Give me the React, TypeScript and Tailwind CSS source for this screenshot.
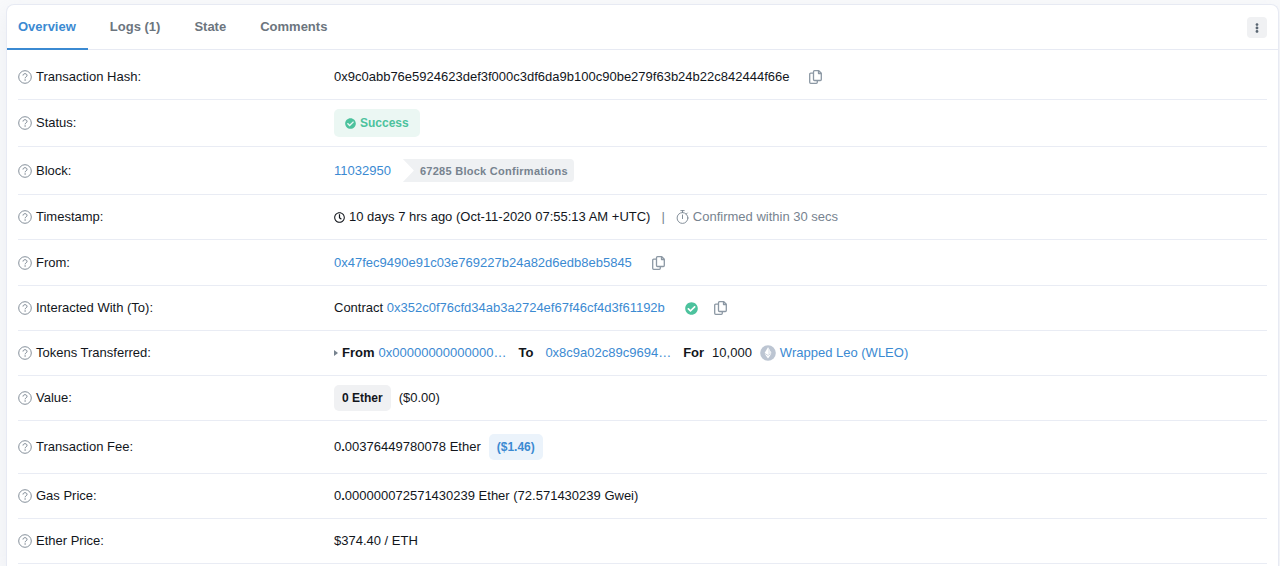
import type { ReactNode } from "react";
import { FaCheckCircle, FaEllipsisV, FaRegClock } from "react-icons/fa";

const tabs = ["Overview", "Logs (1)", "State", "Comments"];

function HelpIcon() {
  return (
    <svg viewBox="0 0 14 14" className="size-[14px] shrink-0 text-[#77838f]" fill="none" stroke="currentColor" aria-hidden="true">
      <circle cx="7" cy="7" r="6.3" strokeWidth="0.9" />
      <path d="M5 5.5C5.1 4.3 5.9 3.7 7 3.7c1.200 0 2 .7 2 1.700 0 1.500-1.900 1.500-1.900 2.900" strokeWidth="1" />
      <circle cx="7.100" cy="10" r=".7" fill="currentColor" stroke="none" />
    </svg>
  );
}

function StopwatchIcon() {
  return (
    <svg viewBox="0 0 13 14" className="h-[14px] w-[13px] shrink-0" fill="none" stroke="currentColor" strokeWidth="0.9" strokeLinecap="round" aria-hidden="true">
      <circle cx="6.500" cy="8" r="5.400" />
      <path d="M4.800.6h3.400M6.500.6v2M10.300 4l1-1M6.500 5v3.600" />
    </svg>
  );
}

function TokenIcon() {
  return (
    <svg viewBox="0 0 16 16" className="size-4 shrink-0" aria-hidden="true">
      <circle cx="8" cy="8" r="7.800" fill="#bcc5d2" />
      <path d="M8 2.300 11.400 8 8 10 4.600 8Z" fill="#fff" />
      <path d="M4.600 8.800 8 10.800l3.400-2L8 13.600Z" fill="#fff" />
      <path d="M8 2.300V10l3.400-2Z" fill="#edf0f4" />
    </svg>
  );
}

function CopyButton({ label }: { label: string }) {
  return (
    <button type="button" aria-label={label} className="shrink-0 text-[#8c98a4]">
      <svg viewBox="0 0 13 14" className="h-[14px] w-[13px]" fill="none" stroke="currentColor" strokeWidth="1.3" strokeLinejoin="round" aria-hidden="true">
        <path d="M5.500.7h4.300L12.300 3.200v6.300a1 1 0 0 1-1 1H5.500a1 1 0 0 1-1-1V1.700a1 1 0 0 1 1-1Z" />
        <path d="M9.500.9v2.600h2.600" />
        <path d="M4.500 3.200H1.700a1 1 0 0 0-1 1v8.100a1 1 0 0 0 1 1h5.600a1 1 0 0 0 1-1v-1.800" />
      </svg>
    </button>
  );
}

function Link({ children }: { children: ReactNode }) {
  return (
    <a href="#" className="text-[#3b8ad2] hover:underline">
      {children}
    </a>
  );
}

function Row({ label, pad = "py-3", children }: { label: string; pad?: string; children: ReactNode }) {
  return (
    <div className={`grid grid-cols-[1fr_3fr] items-center gap-x-[5px] border-b border-[#e9ecf4] ${pad}`}>
      <dt className="flex items-center gap-1">
        <HelpIcon />
        {label}
      </dt>
      <dd className="flex items-center whitespace-nowrap">{children}</dd>
    </div>
  );
}

export default function App() {
  return (
    <div className="flex min-h-screen flex-col bg-[#f8f9fb] pt-1 pr-px pl-[6px] font-['Liberation_Sans',Arial,sans-serif] text-[13px] leading-5 text-[#12161c]">
      <main className="flex-1 rounded-t-[8px] border border-b-0 border-[#e7eaf3] bg-white shadow-[0_8px_19px_rgba(189,197,209,0.2)]">
        <header className="flex items-center justify-between border-b border-[#e7eaf3] pr-[11px]">
          <nav className="-mb-px flex gap-[10px] font-bold text-[#6c757e]">
            {tabs.map((tab, i) => (
              <a
                key={tab}
                href="#"
                aria-current={i === 0 ? "page" : undefined}
                className={`border-b-2 px-3 pt-3 pb-[11px] first:pl-[11px] ${i === 0 ? "border-[#3b8ad2] text-[#3b8ad2]" : "border-transparent"}`}
              >
                {tab}
              </a>
            ))}
          </nav>
          <button type="button" aria-label="More options" className="mt-px flex h-[21px] w-5 items-center justify-center rounded-[4px] bg-[#f0f1f3] text-[#5a6672]">
            <FaEllipsisV className="size-[10px]" />
          </button>
        </header>

        <dl className="px-[11px]">
          <Row label="Transaction Hash:" pad="pt-[17px] pb-3">
            <span className="mr-5">0x9c0abb76e5924623def3f000c3df6da9b100c90be279f63b24b22c842444f66e</span>
            <CopyButton label="Copy transaction hash" />
          </Row>
          <Row label="Status:" pad="py-[9px]">
            <span className="flex h-7 items-center gap-1 rounded-[5px] bg-[#ebf7f3] px-[11px] text-[12px] font-bold text-[#4cc29d]">
              <FaCheckCircle className="size-[11px]" />
              Success
            </span>
          </Row>
          <Row label="Block:">
            <Link>11032950</Link>
            <span className="ml-3 flex h-[23px] items-center rounded-r-[4px] bg-[#eff1f3] pr-[6px] pl-[17px] text-[11px] font-bold tracking-wide text-[#77838f] [clip-path:polygon(0_0,100%_0,100%_100%,0_100%,11px_50%)]">
              67285 Block Confirmations
            </span>
          </Row>
          <Row label="Timestamp:">
            <FaRegClock className="mr-1 size-[11px]" />
            10 days 7 hrs ago (Oct-11-2020 07:55:13 AM +UTC)
            <span className="mx-[11px] text-[#77838f]">|</span>
            <span className="flex items-center gap-1 text-[#77838f]">
              <StopwatchIcon />
              Confirmed within 30 secs
            </span>
          </Row>
          <Row label="From:" pad="pt-[13px] pb-3">
            <span className="mr-5">
              <Link>0x47fec9490e91c03e769227b24a82d6edb8eb5845</Link>
            </span>
            <CopyButton label="Copy sender address" />
          </Row>
          <Row label="Interacted With (To):">
            <span className="mr-5">
              Contract <Link>0x352c0f76cfd34ab3a2724ef67f46cf4d3f61192b</Link>
            </span>
            <FaCheckCircle className="mr-4 size-[13px] text-[#4cc29d]" />
            <CopyButton label="Copy contract address" />
          </Row>
          <Row label="Tokens Transferred:">
            <svg viewBox="0 0 4 6" className="mr-1 h-[6px] w-1" aria-hidden="true">
              <path d="M0 0 4 3 0 6Z" fill="#77838f" />
            </svg>
            <b className="mr-1">From</b>
            <Link>0x00000000000000…</Link>
            <b className="mx-3">To</b>
            <Link>0x8c9a02c89c9694…</Link>
            <b className="mr-2 ml-3">For</b>
            <span className="mr-2">10,000</span>
            <span className="mr-1">
              <TokenIcon />
            </span>
            <Link>Wrapped Leo (WLEO)</Link>
          </Row>
          <Row label="Value:" pad="py-[9px]">
            <span className="mr-2 flex h-[26px] items-center rounded-[5px] bg-[#f0f1f3] px-2 text-[12px] font-bold">0 Ether</span>
            ($0.00)
          </Row>
          <Row label="Transaction Fee:" pad="py-[12px]">
            <span>
              0<b>.</b>00376449780078 Ether
            </span>
            <span className="my-px ml-2 flex h-[26px] items-center rounded-[5px] bg-[#ebf3fb] px-2 text-[12px] font-bold text-[#3b8ad2]">($1.46)</span>
          </Row>
          <Row label="Gas Price:">
            <span>
              0<b>.</b>000000072571430239 Ether (72.571430239 Gwei)
            </span>
          </Row>
          <Row label="Ether Price:">$374.40 / ETH</Row>
        </dl>
      </main>
    </div>
  );
}
